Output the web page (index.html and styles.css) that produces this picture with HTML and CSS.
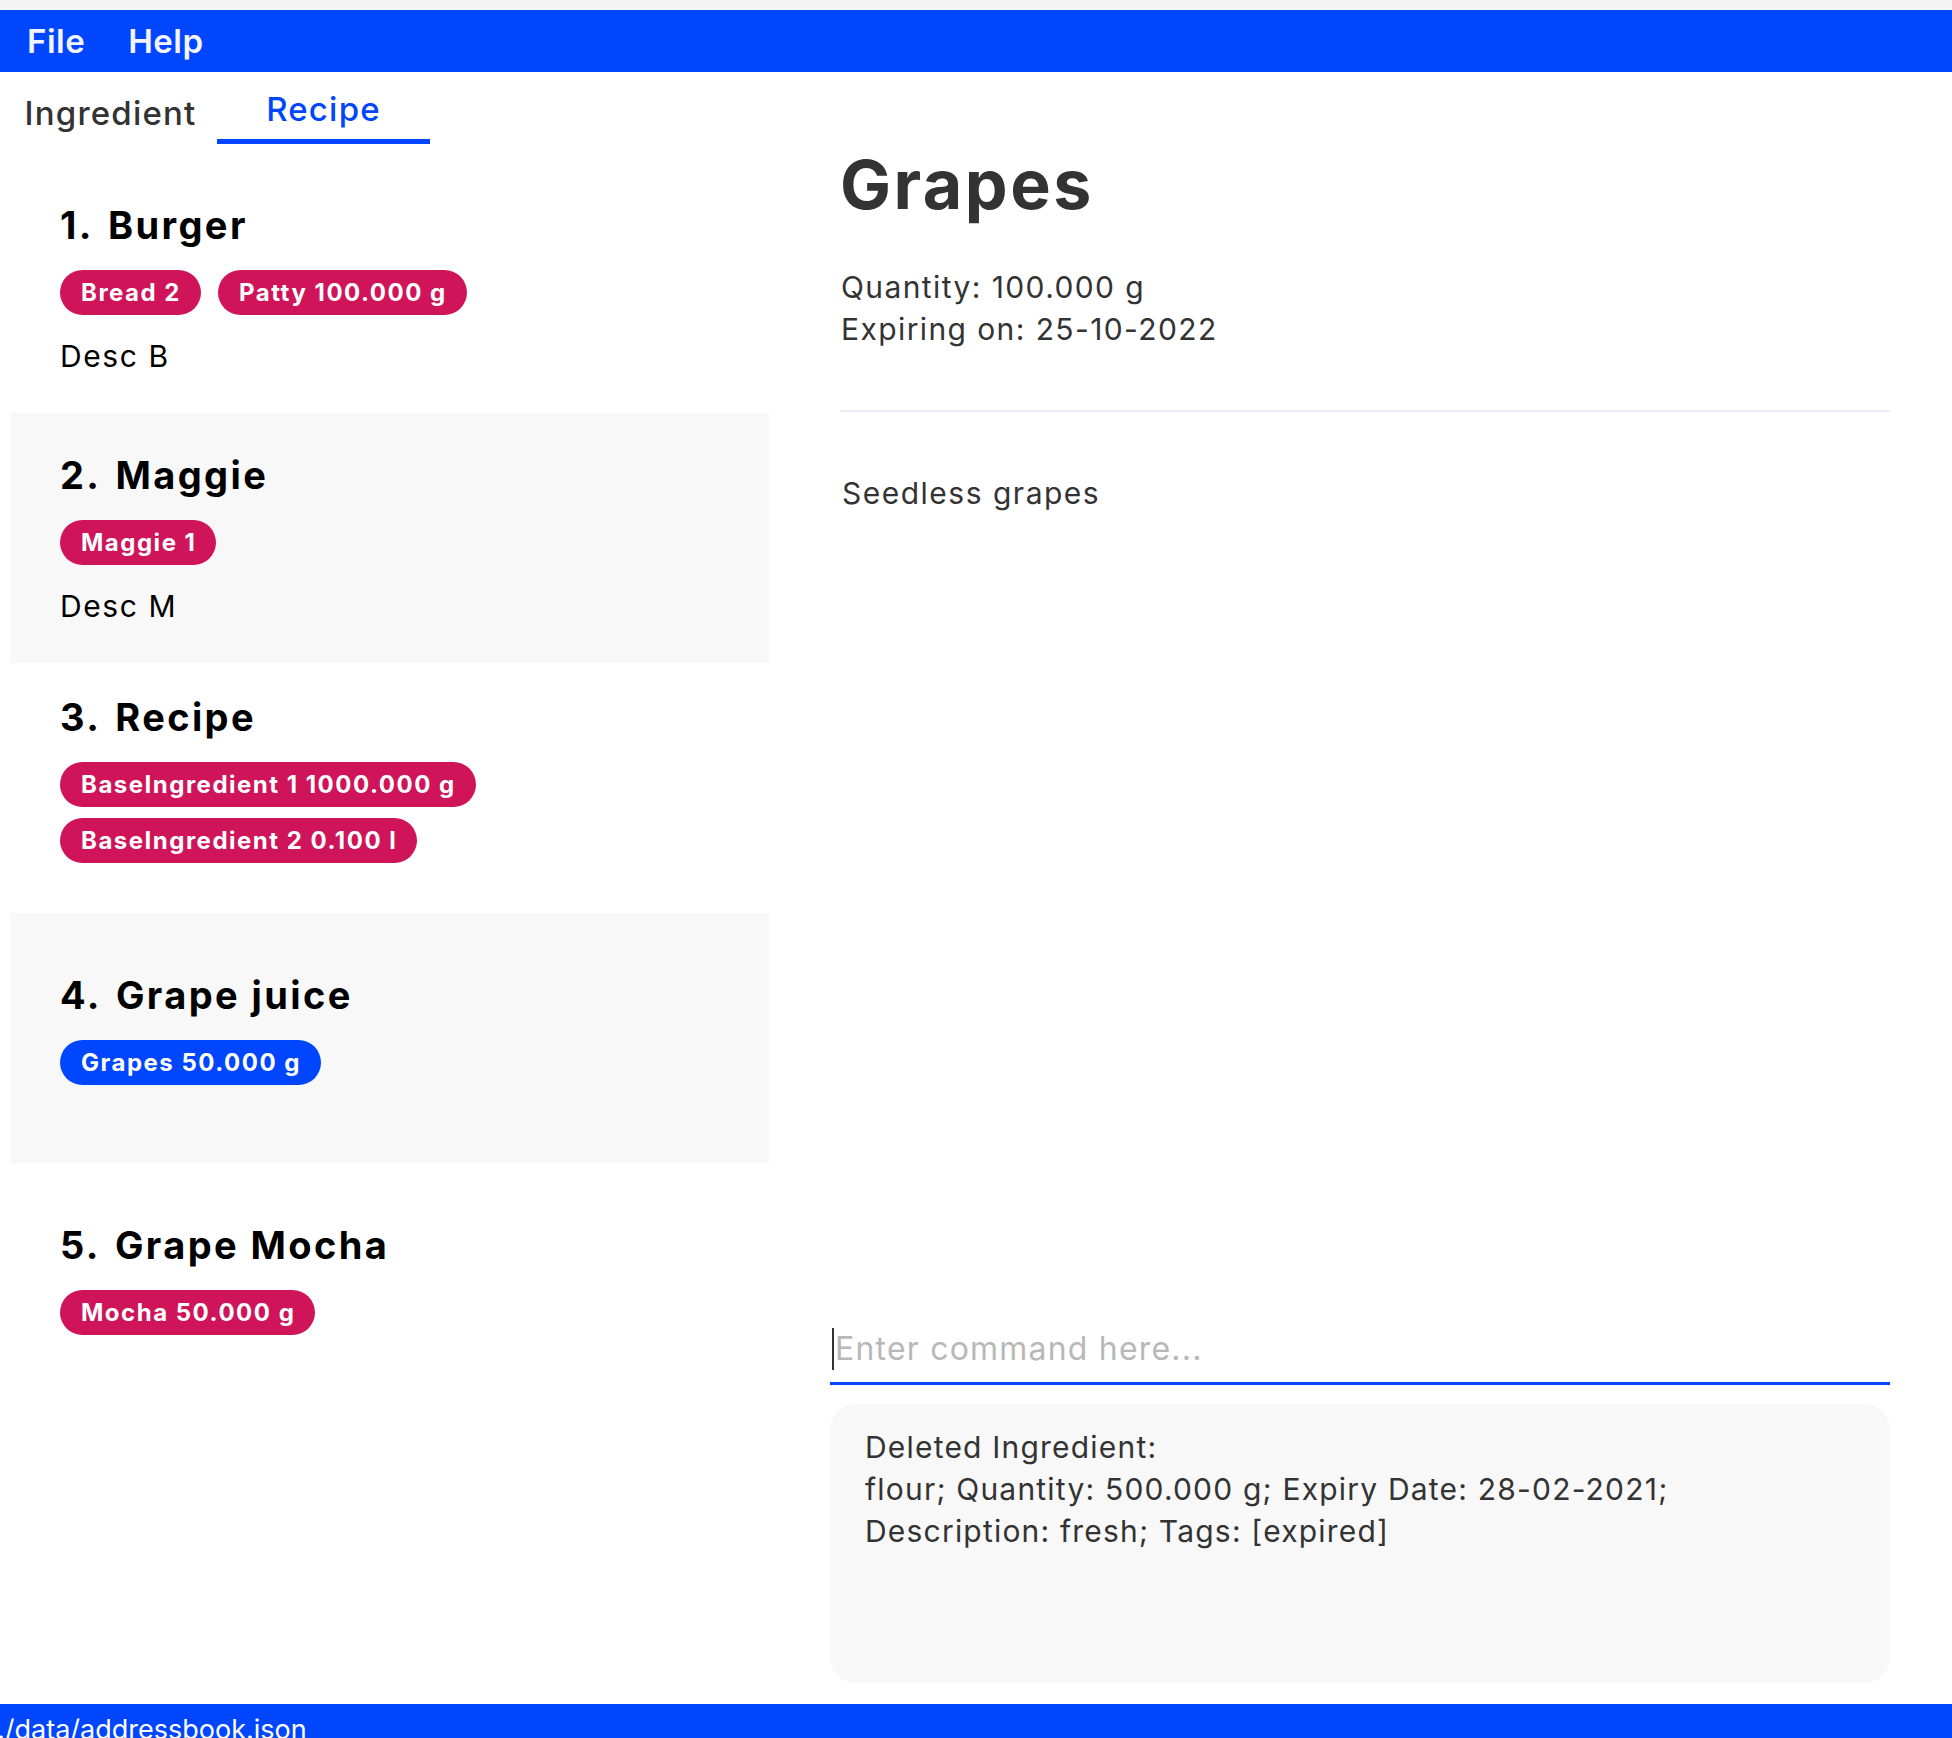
FILE: index.html
```html
<!DOCTYPE html>
<html lang="en">
<head>
<meta charset="utf-8">
<title>Recipe</title>
<link rel="stylesheet" href="styles.css">
</head>
<body>
<div class="strip"></div>
<div class="menubar">
  <span class="menu-item">File</span>
  <span class="menu-item">Help</span>
</div>
<div class="main">
  <div class="left">
    <div class="tabs">
      <div class="tab">Ingredient</div>
      <div class="tab tab-active">Recipe</div>
    </div>
    <div class="list">
      <div class="card">
        <div class="card-title"><span class="idx">1.</span>Burger</div>
        <div class="pills"><span class="pill">Bread 2</span><span class="pill">Patty 100.000 g</span></div>
        <div class="desc">Desc B</div>
      </div>
      <div class="card card-alt">
        <div class="card-title"><span class="idx">2.</span>Maggie</div>
        <div class="pills"><span class="pill">Maggie 1</span></div>
        <div class="desc">Desc M</div>
      </div>
      <div class="card">
        <div class="card-title"><span class="idx">3.</span>Recipe</div>
        <div class="pills pills-stack"><span class="pill">BaseIngredient 1 1000.000 g</span><span class="pill">BaseIngredient 2 0.100 l</span></div>
        <div class="desc"></div>
      </div>
      <div class="card card-alt">
        <div class="card-title"><span class="idx">4.</span>Grape juice</div>
        <div class="pills"><span class="pill pill-blue">Grapes 50.000 g</span></div>
        <div class="desc"></div>
      </div>
      <div class="card">
        <div class="card-title"><span class="idx">5.</span>Grape Mocha</div>
        <div class="pills"><span class="pill">Mocha 50.000 g</span></div>
        <div class="desc"></div>
      </div>
    </div>
  </div>
  <div class="right">
    <div class="details">
      <h1 class="detail-title">Grapes</h1>
      <div class="detail-info">
        <div>Quantity: 100.000 g</div>
        <div>Expiring on: 25-10-2022</div>
      </div>
      <div class="divider"></div>
      <div class="detail-desc">Seedless grapes</div>
    </div>
    <div class="command">
      <span class="caret"></span><span class="placeholder">Enter command here...</span>
    </div>
    <div class="result">
      <div>Deleted Ingredient:</div>
      <div>flour; Quantity: 500.000 g; Expiry Date: 28-02-2021;</div>
      <div>Description: fresh; Tags: [expired]</div>
    </div>
  </div>
</div>
<div class="statusbar">./data/addressbook.json</div>
</body>
</html>
```
FILE: styles.css
```css
html, body {
  margin: 0;
  padding: 0;
}
body {
  width: 1952px;
  height: 1738px;
  overflow: hidden;
  display: flex;
  flex-direction: column;
  background: #ffffff;
  font-family: "Inter", "Open Sans", sans-serif;
  color: #333333;
}
.strip {
  height: 10px;
  background: #f4f4f4;
  flex: none;
}
.menubar {
  height: 62px;
  flex: none;
  background: #0046ff;
  display: flex;
  align-items: center;
  padding-left: 27px;
  gap: 43px;
}
.menu-item {
  color: #f2f4ff;
  font-size: 33px;
  font-weight: 600;
  letter-spacing: 0.5px;
}
.main {
  flex: 1;
  display: flex;
  min-height: 0;
}
.left {
  width: 769px;
  flex: none;
  display: flex;
  flex-direction: column;
}
.tabs {
  height: 72px;
  display: flex;
  padding-left: 4px;
}
.tab {
  width: 213px;
  box-sizing: border-box;
  display: flex;
  justify-content: center;
  align-items: center;
  padding-top: 10px;
  font-size: 33px;
  font-weight: 500;
  letter-spacing: 1.2px;
  color: #333333;
}
.tab-active {
  color: #0046ff;
  border-bottom: 5px solid #0046ff;
  padding-bottom: 4px;
}
.list {
  margin-top: 19px;
  margin-left: 10px;
  display: flex;
  flex-direction: column;
}
.card {
  min-height: 250px;
  box-sizing: border-box;
  padding: 0 50px;
  display: flex;
  flex-direction: column;
  justify-content: center;
  gap: 21px;
  background: #ffffff;
}
.card-alt {
  background: #f8f8f8;
}
.card-title {
  font-size: 38px;
  line-height: 48px;
  font-weight: 700;
  letter-spacing: 2.4px;
  color: #000000;
}
.idx {
  margin-right: 14px;
}
.pills {
  display: flex;
  flex-wrap: wrap;
  gap: 11px 17px;
}
.pills-stack {
  flex-direction: column;
  align-items: flex-start;
}
.pill {
  height: 45px;
  display: inline-flex;
  align-items: center;
  padding: 0 20px 0 21px;
  border-radius: 23px;
  background: #d0145a;
  color: #ffffff;
  font-size: 24px;
  font-weight: 700;
  letter-spacing: 1.5px;
}
.pill-blue {
  background: #0046ff;
}
.desc {
  font-size: 30px;
  line-height: 40px;
  letter-spacing: 1.6px;
  color: #000000;
}
.desc:empty {
  height: 0;
}
.right {
  margin-left: 61px;
  width: 1060px;
  flex: none;
  display: flex;
  flex-direction: column;
}
.details {
  flex: 1;
  padding-left: 10px;
}
.detail-title {
  margin: 72px 0 0 0;
  font-size: 68px;
  line-height: 80px;
  font-weight: 700;
  letter-spacing: 2.5px;
  color: #333333;
}
.detail-info {
  margin: 42px 0 0 1px;
  font-size: 30px;
  line-height: 42px;
  letter-spacing: 1.4px;
}
.divider {
  margin-top: 60px;
  height: 2px;
  background: #e8eef5;
}
.detail-desc {
  margin: 60px 0 0 2px;
  font-size: 30px;
  line-height: 42px;
  letter-spacing: 1.5px;
}
.command {
  height: 47px;
  padding-bottom: 10px;
  border-bottom: 3px solid #0046ff;
  display: flex;
  align-items: center;
}
.caret {
  width: 2px;
  height: 42px;
  background: #333333;
  margin: 0 1px 0 2px;
}
.placeholder {
  font-size: 32px;
  letter-spacing: 1.2px;
  color: #b8b8b8;
}
.result {
  margin-top: 19px;
  margin-bottom: 21px;
  height: 279px;
  box-sizing: border-box;
  padding: 22px 35px;
  border-radius: 26px;
  background: #f8f8f8;
  font-size: 30px;
  line-height: 42px;
  letter-spacing: 1.2px;
  color: #333333;
}
.statusbar {
  height: 34px;
  flex: none;
  overflow: hidden;
  background: #0046ff;
  color: #ffffff;
  font-size: 27px;
  line-height: 40px;
  padding-top: 6px;
  box-sizing: border-box;
  text-indent: -3px;
}
```
